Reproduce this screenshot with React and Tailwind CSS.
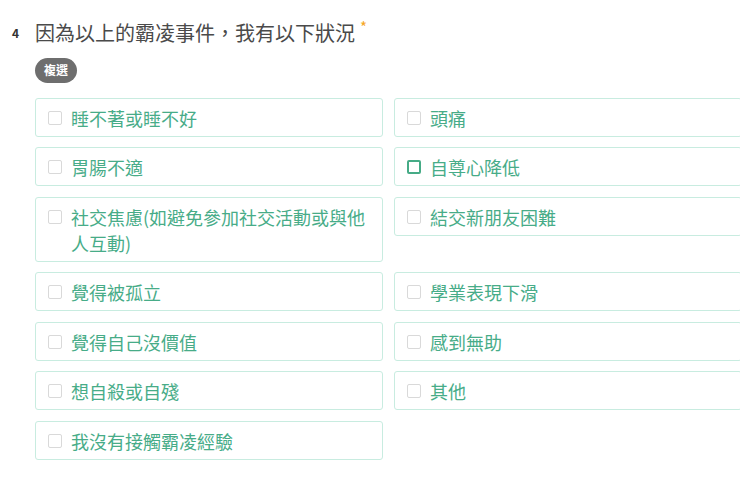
const options = [
  { label: "睡不著或睡不好" },
  { label: "頭痛" },
  { label: "胃腸不適" },
  { label: "自尊心降低", hover: true },
  { label: "社交焦慮(如避免參加社交活動或與他人互動)" },
  { label: "結交新朋友困難" },
  { label: "覺得被孤立" },
  { label: "學業表現下滑" },
  { label: "覺得自己沒價值" },
  { label: "感到無助" },
  { label: "想自殺或自殘" },
  { label: "其他" },
  { label: "我沒有接觸霸凌經驗" },
];

function Option({ label, hover }) {
  return (
    <label className="flex items-start gap-[9px] border border-[#c8ece0] rounded-[3px] bg-white pl-[12px] pr-[12px] pt-[6px] pb-[5px] cursor-pointer">
      <span
        className={
          hover
            ? "mt-[6px] w-[14px] h-[14px] shrink-0 border-2 border-[#46ab86] rounded-[2px]"
            : "mt-[6px] w-[14px] h-[14px] shrink-0 border border-[#d9d9d9] rounded-[2px]"
        }
      />
      <span className="text-[18px] leading-[26px] text-[#47ac88]">{label}</span>
    </label>
  );
}

export default function App() {
  return (
    <div
      className="w-[740px] h-[501px] overflow-hidden bg-white"
      style={{ fontFamily: '"Noto Sans CJK TC", "Noto Sans", sans-serif' }}
    >
      <div className="pt-[19px]">
        <div className="flex items-start">
          <span className="w-[35px] pl-[12px] pt-[5px] text-[12px] font-bold text-[#333]">4</span>
          <span className="text-[20px] leading-[28px] text-[#4a4a4a]">因為以上的霸凌事件，我有以下狀況</span>
          <span className="ml-[5px] -mt-[3px] text-[15px] text-[#f5a623]">*</span>
        </div>
        <div className="pl-[35px] mt-[9px]">
          <span className="inline-flex items-center justify-center h-[25px] px-[9px] rounded-full bg-[#6e6e6e] text-white text-[12px] font-bold">
            複選
          </span>
        </div>
        <div className="pl-[35px] mt-[15px] grid grid-cols-[348px_348px] gap-x-[11px] gap-y-[10.5px] items-start w-[800px]">
          {options.map((o) => (
            <Option key={o.label} {...o} />
          ))}
        </div>
      </div>
    </div>
  );
}
